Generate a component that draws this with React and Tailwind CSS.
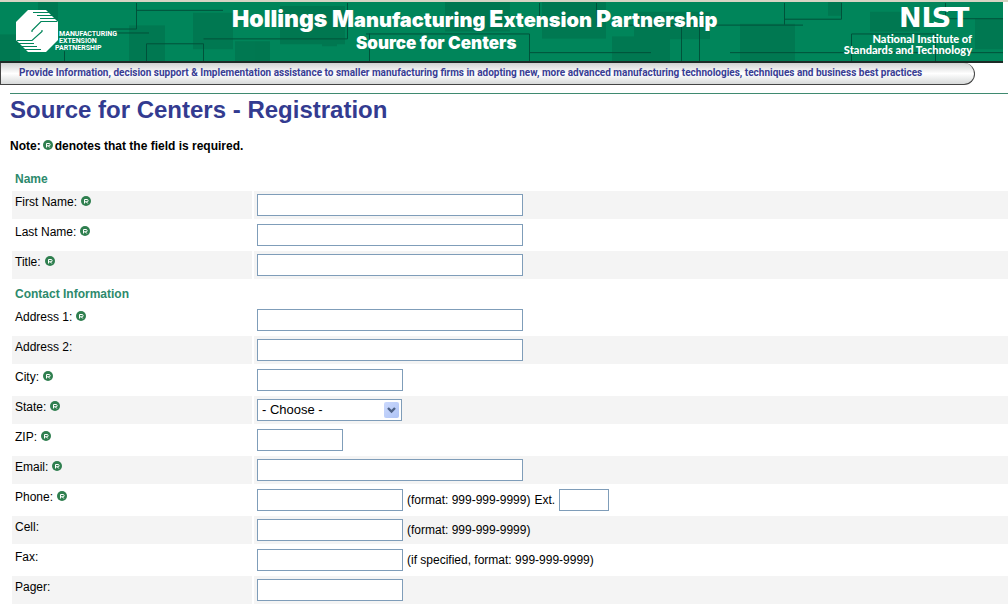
import clsx from 'clsx'

const RequiredMark = () => (
    <svg viewBox="0 0 10 10" role="img" aria-label="Required" className="inline-block w-[10px] h-[10px] mb-[2px] shrink-0">
        <circle cx="5" cy="5" r="5" fill="#2f7f4f" />
        <path d="M3.500 7.500V3.500H6a1 1 0 0 1 0 2.300H3.500M5.300 5.800L6.800 7.500" fill="none" stroke="#fff" strokeWidth="1" />
    </svg>
)

const TextBox = ({ id, width }) => (
    <input
        id={id}
        name={id}
        type="text"
        className={clsx('h-[22px] px-1 bg-white border border-[#7f9db9] text-[13px] outline-none', width)}
    />
)

const StateSelect = ({ id }) => (
    <div className="relative">
        <select id={id} name={id} className="block appearance-none w-[145px] h-[22px] pl-1 pr-5 bg-white border border-[#7f9db9] text-[13px] outline-none">
            <option>- Choose -</option>
        </select>
        <span className="absolute right-[3px] top-[3px] w-[15px] h-4 rounded-xs bg-linear-to-br from-[#cbd9fd] to-[#aec3f5] pointer-events-none">
            <svg viewBox="0 0 15 16" className="block w-full h-full">
                <path d="M4 6l3.500 3.500L11 6" fill="none" stroke="#4d6185" strokeWidth="2.400" />
            </svg>
        </span>
    </div>
)

const LONG = 'w-[266px]'
const MEDIUM = 'w-[146px]'

const sections = [
    {
        title: 'Name',
        fields: [
            { id: 'firstName', label: 'First Name:', required: true, width: LONG, shaded: true },
            { id: 'lastName', label: 'Last Name:', required: true, width: LONG },
            { id: 'title', label: 'Title:', required: true, width: LONG, shaded: true },
        ],
    },
    {
        title: 'Contact Information',
        fields: [
            { id: 'address1', label: 'Address 1:', required: true, width: LONG },
            { id: 'address2', label: 'Address 2:', width: LONG, shaded: true },
            { id: 'city', label: 'City:', required: true, width: MEDIUM },
            { id: 'state', label: 'State:', required: true, select: true, shaded: true },
            { id: 'zip', label: 'ZIP:', required: true, width: 'w-[86px]' },
            { id: 'email', label: 'Email:', required: true, width: LONG, shaded: true },
            { id: 'phone', label: 'Phone:', required: true, width: MEDIUM, hint: '(format: 999-999-9999)', ext: true },
            { id: 'cell', label: 'Cell:', width: MEDIUM, hint: '(format: 999-999-9999)', shaded: true },
            { id: 'fax', label: 'Fax:', width: MEDIUM, hint: '(if specified, format: 999-999-9999)' },
            { id: 'pager', label: 'Pager:', width: MEDIUM, shaded: true },
        ],
    },
]

const Field = ({ field }) => {
    const { id, label, required, width, hint, ext, select, shaded } = field
    const bg = shaded ? 'bg-[#f4f4f4]' : 'bg-white'

    return (
        <>
            <div className={clsx('p-[3px]', bg)}>
                <label htmlFor={id} className="flex items-center gap-1 leading-4">
                    {label}
                    {required && <RequiredMark />}
                </label>
            </div>
            <div className={clsx('flex items-center gap-1 p-[3px]', bg)}>
                {select ? <StateSelect id={id} /> : <TextBox id={id} width={width} />}
                {hint && <span>{hint}</span>}
                {ext && (
                    <>
                        <label htmlFor="ext">Ext.</label>
                        <TextBox id="ext" width="w-[50px]" />
                    </>
                )}
            </div>
        </>
    )
}

const MepLogo = () => (
    <svg viewBox="0 0 42 42" aria-hidden="true" className="w-[42px] h-[42px] shrink-0">
        <path d="M12 0H30L42 12V30L30 42H12L0 30V12Z" fill="#fff" />
        <g fill="none" stroke="#00855a" strokeWidth="1.200">
            <path d="M17 2.500H33M21 5.500H36M24 8.500H39M41 11.500H25L16 20.500V22" />
            <path d="M1 30.500H16L26 21.500V20M3 33.500H18M6 36.500H21M9 39.500H25" />
        </g>
    </svg>
)

// circuit-board pattern behind the banner
const BannerPattern = () => (
    <svg viewBox="0 0 1003 60" preserveAspectRatio="none" aria-hidden="true" className="absolute inset-0 w-full h-full">
        <g fill="#006f4b" opacity=".6">
            <path d="M0 33H20V60H0ZM38 0H58V18H38ZM129 24H165V60H129ZM193 11H233V48H193ZM280 4H345V43H280ZM322 28H337V45H322ZM235 40H270V60H235Z" />
            <path d="M445 0H510V30H445ZM542 0H606V37H542ZM612 35H670V60H612ZM634 10H710V38H634ZM740 22H795V60H740ZM828 0H842V14H828ZM870 10H920V30H870ZM975 17H1003V48H975Z" />
        </g>
        <g fill="none" stroke="#00513a" strokeWidth="1">
            <path d="M64.500 50V60M110 27.500H136.500V1M136.500 8.500H223M90 31.500H149M146.500 60V42.500H203.500V60M203.500 37.500H347.500V1M366 32.500H529.500V60M369.500 32V60" />
            <path d="M529.500 51.500H651M539.500 1V24M596.500 1V24M610 23.500H803M681.500 23V60M699.500 23V60M784.500 1V23M784.500 17.500H841.500V1M730 51.500H1003M851.500 60V32.500H935.500V60M945.500 1V17H1003" />
        </g>
    </svg>
)

// the I and S share a foot, the S and T share a top bar
const NistLogo = () => (
    <svg viewBox="0 0 72 20" className="w-[72px] h-5 overflow-visible" fill="#fff">
        <text x="-1" y="19" className="font-['DejaVu_Sans'] font-bold text-[27px]">NIST</text>
        <rect x="26" y="15" width="17" height="4" />
        <rect x="42" y="-1" width="16" height="4" />
    </svg>
)

const Banner = () => (
    <header className="border-t-2 border-[#d8d4c4]">
        <div className="relative mr-[5px] h-[61px] bg-[#00855a] border-b-2 border-[#1d2b27] text-white">
            <BannerPattern />
            <div className="relative flex h-full pl-4 pr-[31px]">
                <div className="flex shrink-0 w-[216px] pt-2">
                    <MepLogo />
                    <div className="pt-[21px] pl-px font-['Roboto',sans-serif] font-bold text-[7px] leading-[7px]">
                        <div>MANUFACTURING</div>
                        <div>EXTENSION</div>
                        <div className="-ml-1">PARTNERSHIP</div>
                    </div>
                </div>
                <div className="font-['Inter',sans-serif] font-black leading-6 pt-[5px] whitespace-nowrap">
                    <div className="text-[20px]">
                        <span className="text-[23px]">Hollings M</span>anufacturing <span className="text-[23px]">E</span>xtension <span className="text-[23px]">P</span>artnership
                    </div>
                    <div className="pl-[124px] text-[17px] leading-[22px]">Source for Centers</div>
                </div>
                <div className="flex flex-col items-end ml-auto pt-[6px] font-['Lato',sans-serif] font-black text-[11px] leading-[11px] text-right whitespace-nowrap">
                    <NistLogo />
                    <div className="pt-[5px]">National Institute of</div>
                    <div>Standards and Technology</div>
                </div>
            </div>
        </div>
        <p className="mr-[33px] h-[22px] pl-[18px] border border-t-0 border-[#444] rounded-r-full bg-linear-to-b from-[#d0d2d2] via-white to-[#d8dada] text-[#383d94] font-['Roboto',sans-serif] text-[10px] leading-5 font-bold whitespace-nowrap">
            Provide Information, decision support &amp; Implementation assistance to smaller manufacturing firms in adopting new, more advanced manufacturing technologies, techniques and business best practices
        </p>
    </header>
)

const App = () => (
    <div className="min-h-screen overflow-x-hidden bg-white text-black font-['Liberation_Sans',Arial,sans-serif] text-[12px] leading-4">
        <Banner />
        <main className="pl-[10px] pt-2">
            <div className="border-t border-[#3f8a70]" />
            <h1 className="text-[24px] leading-8 text-[#333b90] font-bold">Source for Centers - Registration</h1>
            <p className="flex items-center gap-[2px] pt-3 font-bold">
                Note: <RequiredMark /> denotes that the field is required.
            </p>
            <form className="grid grid-cols-[240px_1fr] gap-[2px] pl-[2px] pt-3">
                {sections.map((section) => (
                    <div key={section.title} className="contents">
                        <h2 className="col-span-2 h-[23px] px-[3px] pt-[5px] font-bold text-[#2d8a6c]">{section.title}</h2>
                        {section.fields.map((field) => (
                            <Field key={field.id} field={field} />
                        ))}
                    </div>
                ))}
            </form>
        </main>
    </div>
)

export default App
